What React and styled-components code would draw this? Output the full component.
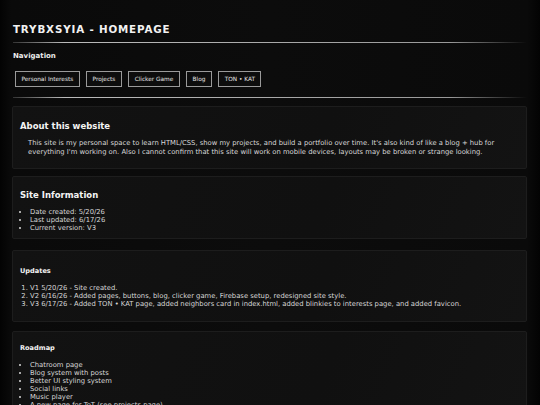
import React from "react";
import styled, { createGlobalStyle } from "styled-components";

const GlobalStyle = createGlobalStyle`
    html, body {
        margin: 0;
        padding: 0;
        background: #040404;
    }
    body {
        font-family: "DejaVu Sans", Verdana, sans-serif;
        color: #dcdcdc;
    }
`;

const Page = styled.div`
    min-height: 405px;
    padding: 0 13px 0 12px;
    background:
        linear-gradient(to right, #030303 0, #0a0a0a 11px, #0c0c0c 50%, #0a0a0a 527px, #030303 540px);
    overflow: hidden;
`;

const Title = styled.h1`
    margin: 0;
    padding: 22px 0 0 1px;
    font-size: 10.3px;
    line-height: 14px;
    font-weight: bold;
    letter-spacing: 0.85px;
    color: #f2f2f2;
`;

const Rule = styled.div`
    height: 1px;
    margin: ${({ $top }) => $top}px 0 0 1px;
    background: linear-gradient(to right, rgba(150, 150, 150, 0.3), #bbb 10%, #999 85%, rgba(120, 120, 120, 0) 100%);
`;

const NavLabel = styled.h2`
    margin: 8px 0 0 1px;
    font-size: 7px;
    line-height: 10px;
    font-weight: bold;
    color: #eee;
`;

const NavRow = styled.nav`
    display: flex;
    gap: 6.5px;
    margin: 10px 0 0 3px;
`;

const NavButton = styled.a`
    display: flex;
    align-items: center;
    height: 16px;
    box-sizing: border-box;
    padding: 0 5.4px;
    border: 1px solid #9a9a9a;
    background: #0d0d0d;
    color: #e6e6e6;
    font-size: 5.8px;
    text-decoration: none;
    white-space: nowrap;
`;

const Card = styled.section`
    margin-top: ${({ $gap }) => $gap}px;
    padding: ${({ $pad }) => $pad};
    background: linear-gradient(110deg, #121212, #101010 60%, #131313);
    border: 1px solid #1d1d1d;
    border-radius: 2px;
`;

const CardTitle = styled.h3`
    margin: 0 0 ${({ $after }) => $after}px 0;
    font-size: ${({ $size }) => $size}px;
    line-height: 12px;
    font-weight: bold;
    color: #f4f4f4;
`;

const Text = styled.p`
    margin: 0 0 0 8px;
    font-size: 6.8px;
    line-height: 9px;
    color: #d8d8d8;
`;

const List = styled.ul`
    margin: 0;
    padding-left: 10px;
    font-size: 6.8px;
    line-height: 8px;
    color: #d8d8d8;
    li::marker {
        font-size: 6px;
    }
`;

const Ordered = styled.ol`
    margin: 0;
    padding-left: 10px;
    font-size: 6.8px;
    line-height: 8px;
    color: #d8d8d8;
`;

const nav = ["Personal Interests", "Projects", "Clicker Game", "Blog", "TON \u2022 KAT"];

const updates = [
    "V1 5/20/26 - Site created.",
    "V2 6/16/26 - Added pages, buttons, blog, clicker game, Firebase setup, redesigned site style.",
    "V3 6/17/26 - Added TON \u2022 KAT page, added neighbors card in index.html, added blinkies to interests page, and added favicon.",
];

const roadmap = [
    "Chatroom page",
    "Blog system with posts",
    "Better UI styling system",
    "Social links",
    "Music player",
    "A new page for ToT (see projects page)",
];

export default function App() {
    return (
        <>
            <GlobalStyle />
            <Page>
                <Title>TRYBXSYIA - HOMEPAGE</Title>
                <Rule $top={6} />
                <NavLabel>Navigation</NavLabel>
                <NavRow>
                    {nav.map((n) => (
                        <NavButton key={n}>{n}</NavButton>
                    ))}
                </NavRow>
                <Rule $top={10} />

                <Card $gap={8} $pad="13px 8px 11px 7px">
                    <CardTitle $size={8.5} $after={7}>About this website</CardTitle>
                    <Text>
                        This site is my personal space to learn HTML/CSS, show my projects, and build a portfolio over time. It's also kind of like a blog + hub for everything I'm working on. Also I cannot confirm that this site will work on mobile devices, layouts may be broken or strange looking.
                    </Text>
                </Card>

                <Card $gap={7} $pad="12px 8px 6px 7px">
                    <CardTitle $size={8.5} $after={7}>Site Information</CardTitle>
                    <List>
                        <li>Date created: 5/20/26</li>
                        <li>Last updated: 6/17/26</li>
                        <li>Current version: V3</li>
                    </List>
                </Card>

                <Card $gap={11} $pad="14px 8px 13px 7px">
                    <CardTitle $size={6.6} $after={7}>Updates</CardTitle>
                    <Ordered>
                        {updates.map((u) => (
                            <li key={u}>{u}</li>
                        ))}
                    </Ordered>
                </Card>

                <Card $gap={9} $pad="10px 8px 12px 7px">
                    <CardTitle $size={6.6} $after={7}>Roadmap</CardTitle>
                    <List>
                        {roadmap.map((r) => (
                            <li key={r}>{r}</li>
                        ))}
                    </List>
                </Card>
            </Page>
        </>
    );
}
